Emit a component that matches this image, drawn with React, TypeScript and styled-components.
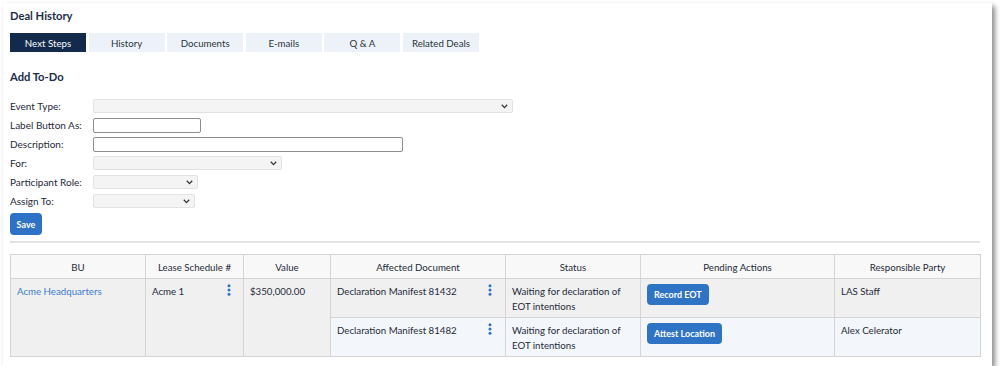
import React, { FC } from 'react';
import styled, { createGlobalStyle } from 'styled-components';

const GlobalStyle = createGlobalStyle`
  html, body {
    margin: 0;
    padding: 0;
    background: #ffffff;
  }
  body {
    font-family: Lato, "Open Sans", Arial, sans-serif;
    color: #1e2a3a;
  }
`;

const Card = styled.div`
  margin: 3px 0 0 3px;
  width: 989px;
  height: 363px;
  box-sizing: border-box;
  padding: 6px 12px 0 7px;
  background: #fff;
  box-shadow: 3px 3px 5px rgba(0, 0, 0, 0.45);
`;

const Title = styled.div`
  font-size: 11.2px;
  font-weight: 700;
  line-height: 13px;
  color: #1b2c48;
`;

const Tabs = styled.div`
  display: flex;
  gap: 2.6px;
  margin-top: 11px;
`;

const Tab = styled.div<{ active?: boolean }>`
  width: 76px;
  height: 19px;
  display: flex;
  align-items: center;
  justify-content: center;
  font-size: 9.7px;
  color: ${({ active }) => (active ? '#ffffff' : '#2a3340')};
  background: ${({ active }) => (active ? '#132a4c' : '#edf2f9')};
`;

const Section = styled.div`
  margin-top: 18px;
  font-size: 11.2px;
  font-weight: 700;
  line-height: 13px;
  color: #1b2c48;
`;

const Form = styled.div`
  margin-top: 16px;
  display: flex;
  flex-direction: column;
  gap: 5px;
`;

const Row = styled.div`
  display: flex;
  align-items: center;
  height: 14px;
`;

const Label = styled.div`
  width: 83px;
  font-size: 10px;
  color: #1e2a3a;
  white-space: nowrap;
`;

const SelectBox = styled.div<{ w: number }>`
  position: relative;
  width: ${({ w }) => w}px;
  height: 14px;
  box-sizing: border-box;
  background: #f4f4f4;
  border: 1px solid #e2e2e2;
  border-radius: 2px;
`;

const Chevron = styled.svg`
  position: absolute;
  right: 4px;
  top: 4px;
`;

const TextInput = styled.div<{ w: number }>`
  width: ${({ w }) => w}px;
  height: 15px;
  box-sizing: border-box;
  background: #fff;
  border: 1px solid #8e8e8e;
  border-radius: 2px;
`;

const SaveButton = styled.div`
  width: 32px;
  height: 22px;
  border-radius: 4px;
  background: #2d72c4;
  color: #fff;
  font-size: 9px;
  font-weight: 700;
  display: flex;
  align-items: center;
  justify-content: center;
`;

const Divider = styled.div`
  margin-top: 6px;
  height: 2px;
  background: #e4e4e4;
`;

const Table = styled.table`
  margin-top: 11px;
  width: 970px;
  border-collapse: collapse;
  table-layout: fixed;
  font-size: 9.7px;
  color: #1e2a3a;
`;

const Th = styled.th`
  height: 23px;
  padding: 0;
  font-weight: 400;
  text-align: center;
  background: #f8f8f8;
  border: 1px solid #d4d4d4;
`;

const Td = styled.td<{ alt?: boolean }>`
  vertical-align: top;
  padding: 5px 6px 0 6px;
  height: 33px;
  line-height: 15px;
  background: ${({ alt }) => (alt ? '#f3f7fb' : '#f0f0f0')};
  border: 1px solid #d4d4d4;
`;

const CellFlex = styled.div<{ pad: number }>`
  display: flex;
  justify-content: space-between;
  align-items: flex-start;
  padding-right: ${({ pad }) => pad}px;
`;

const Link = styled.span`
  color: #3a7bd5;
`;

const ActionButton = styled.div`
  display: inline-flex;
  align-items: center;
  height: 21px;
  padding: 0 7px;
  border-radius: 4px;
  background: #2f73c5;
  color: #fff;
  font-size: 9px;
  font-weight: 700;
`;

const Kebab: FC = () => (
  <svg width="4" height="12" viewBox="0 0 4 12">
    <circle cx="2" cy="1.8" r="1.5" fill="#2f73c5" />
    <circle cx="2" cy="6" r="1.5" fill="#2f73c5" />
    <circle cx="2" cy="10.2" r="1.5" fill="#2f73c5" />
  </svg>
);

const Select: FC<{ w: number }> = ({ w }) => (
  <SelectBox w={w}>
    <Chevron width="7" height="5" viewBox="0 0 7 5">
      <path d="M0.8 0.8 L3.5 3.6 L6.2 0.8" stroke="#333" strokeWidth="1.3" fill="none" />
    </Chevron>
  </SelectBox>
);

const tabs = ['Next Steps', 'History', 'Documents', 'E-mails', 'Q & A', 'Related Deals'];
const columns: [string, number][] = [
  ['BU', 135],
  ['Lease Schedule #', 98],
  ['Value', 87],
  ['Affected Document', 175],
  ['Status', 135],
  ['Pending Actions', 194],
  ['Responsible Party', 146],
];

const App: FC = () => (
  <>
    <GlobalStyle />
    <Card>
      <Title>Deal History</Title>
      <Tabs>
        {tabs.map((t, i) => (
          <Tab key={t} active={i === 0}>
            {t}
          </Tab>
        ))}
      </Tabs>
      <Section>Add To-Do</Section>
      <Form>
        <Row>
          <Label>Event Type:</Label>
          <Select w={420} />
        </Row>
        <Row>
          <Label>Label Button As:</Label>
          <TextInput w={108} />
        </Row>
        <Row>
          <Label>Description:</Label>
          <TextInput w={310} />
        </Row>
        <Row>
          <Label>For:</Label>
          <Select w={189} />
        </Row>
        <Row>
          <Label>Participant Role:</Label>
          <Select w={105} />
        </Row>
        <Row>
          <Label>Assign To:</Label>
          <Select w={102} />
        </Row>
        <SaveButton>Save</SaveButton>
      </Form>
      <Divider />
      <Table>
        <colgroup>
          {columns.map(([name, w]) => (
            <col key={name} style={{ width: w }} />
          ))}
        </colgroup>
        <thead>
          <tr>
            {columns.map(([name]) => (
              <Th key={name}>{name}</Th>
            ))}
          </tr>
        </thead>
        <tbody>
          <tr>
            <Td rowSpan={2}>
              <Link>Acme Headquarters</Link>
            </Td>
            <Td rowSpan={2}>
              <CellFlex pad={6}>
                Acme 1
                <Kebab />
              </CellFlex>
            </Td>
            <Td rowSpan={2}>$350,000.00</Td>
            <Td>
              <CellFlex pad={7}>
                Declaration Manifest 81432
                <Kebab />
              </CellFlex>
            </Td>
            <Td>Waiting for declaration of EOT intentions</Td>
            <Td>
              <ActionButton>Record EOT</ActionButton>
            </Td>
            <Td>LAS Staff</Td>
          </tr>
          <tr>
            <Td alt>
              <CellFlex pad={7}>
                Declaration Manifest 81482
                <Kebab />
              </CellFlex>
            </Td>
            <Td alt>Waiting for declaration of EOT intentions</Td>
            <Td alt>
              <ActionButton>Attest Location</ActionButton>
            </Td>
            <Td alt>Alex Celerator</Td>
          </tr>
        </tbody>
      </Table>
    </Card>
  </>
);

export default App;
